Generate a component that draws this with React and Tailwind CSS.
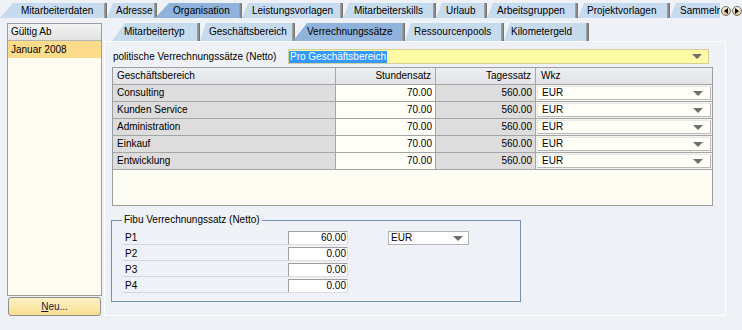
import clsx from 'clsx';

const mainTabs = [
  { label: 'Mitarbeiterdaten', w: 'w-[107px]', pl: 'pl-[21px]', first: true },
  { label: 'Adresse', w: 'w-[50px]', pl: 'pl-[9px]' },
  { label: 'Organisation', w: 'w-[87px]', pl: 'pl-[18px]', active: true },
  { label: 'Leistungsvorlagen', w: 'w-[101px]', pl: 'pl-[10px]' },
  { label: 'Mitarbeiterskills', w: 'w-[93px]', pl: 'pl-[11px]' },
  { label: 'Urlaub', w: 'w-[51px]', pl: 'pl-[10px]' },
  { label: 'Arbeitsgruppen', w: 'w-[91px]', pl: 'pl-[10px]' },
  { label: 'Projektvorlagen', w: 'w-[92px]', pl: 'pl-[9px]' },
  { label: 'Sammeln', w: 'w-[80px]', pl: 'pl-[10px]' },
];

const subTabs = [
  { label: 'Mitarbeitertyp', w: 'w-[88px]', pl: 'pl-[12px]', first: true },
  { label: 'Geschäftsbereich', w: 'w-[95px]', pl: 'pl-[9px]' },
  { label: 'Verrechnungssätze', w: 'w-[112px]', pl: 'pl-[14px]', active: true },
  { label: 'Ressourcenpools', w: 'w-[99px]', pl: 'pl-[9px]' },
  { label: 'Kilometergeld', w: 'w-[85px]', pl: 'pl-[7px]' },
];

const bereiche = ['Consulting', 'Kunden Service', 'Administration', 'Einkauf', 'Entwicklung'];

const fibu = [
  { p: 'P1', v: '60.00' },
  { p: 'P2', v: '0.00' },
  { p: 'P3', v: '0.00' },
  { p: 'P4', v: '0.00' },
];

function Caret() {
  return (
    <svg width="10" height="5" viewBox="0 0 10 5" className="shrink-0">
      <path d="M0 0h10L5 5z" fill="#6e6e6e" />
    </svg>
  );
}

function Tab({ t }) {
  return (
    <div
      className={clsx(
        'flex h-full shrink-0',
        t.w,
        t.active && '-ml-[2px] z-10',
        t.active
          ? 'bg-[#8fb3dc] [clip-path:polygon(14px_0,100%_0,100%_100%,0_100%)]'
          : t.first
            ? 'bg-[#c7dbef] [clip-path:polygon(13px_0,100%_0,100%_100%,0_100%)]'
            : 'bg-[#c7dbef] [clip-path:polygon(6px_0,100%_0,100%_100%,0_100%)]'
      )}
    >
      <div className={clsx('flex flex-1 items-center whitespace-nowrap overflow-hidden', t.pl)}>{t.label}</div>
      <div className="w-[3px] shrink-0 bg-gradient-to-r from-[#a9a9a9] to-[#6c6c6c]" />
    </div>
  );
}

function ScrollBtn({ dir }) {
  return (
    <div className="flex h-[10px] w-[10px] items-center justify-center rounded-full border border-[#6f6f6f] bg-gradient-to-b from-[#fbf3d6] to-[#d9c48a]">
      <svg width="4" height="6" viewBox="0 0 4 6">
        <path d={dir === 'l' ? 'M4 0v6L0 3z' : 'M0 0v6l4-3z'} fill="#000" />
      </svg>
    </div>
  );
}

export default function App() {
  return (
    <div className="h-[330px] w-[742px] overflow-hidden bg-[#eef1f6] font-['Liberation_Sans',Arial,sans-serif] text-[10px] leading-none text-black">
      {/* Haupt-Reiter */}
      <div className="flex h-[18px] items-end">
        <div className="flex h-[15px] w-[720px] overflow-hidden">
          {mainTabs.map(t => <Tab key={t.label} t={t} />)}
        </div>
        <div className="mb-[2px] flex gap-[1px] self-center pt-[6px] pl-[1px]">
          <ScrollBtn dir="l" />
          <ScrollBtn dir="r" />
        </div>
      </div>

      <div className="flex pt-[5px]">
        {/* Gültig Ab Liste */}
        <div className="ml-[7px] flex w-[95px] flex-col">
          <div className="flex h-[273px] flex-col border border-[#9c9c9c] bg-[#fffdf2]">
            <div className="flex h-[17px] items-center border-b border-[#b4b4b4] bg-gradient-to-b from-[#f3f3f3] to-[#e3e3e3] pl-[3px]">Gültig Ab</div>
            <div className="flex h-[17px] items-center bg-[#fcdc8b] pl-[3px]">Januar 2008</div>
          </div>
          <button className="mt-[1px] ml-[1px] flex h-[19px] w-[93px] items-center justify-center rounded-[3px] border border-[#8e8e8e] bg-gradient-to-b from-[#fdf1c6] to-[#f9df8e] text-[10px] text-[#1a1a40]">
            <span className="underline">N</span>eu...
          </button>
        </div>

        {/* Rechter Bereich */}
        <div className="ml-[2px] flex w-[622px] flex-col">
          <div className="flex h-[18px] pl-[8px]">
            {subTabs.map(t => <Tab key={t.label} t={t} />)}
          </div>
          <div className="flex h-[275px] flex-col border border-[#fafcff] pl-[7px]">
            <div className="mt-[7px] flex h-[15px] items-center">
              <div className="w-[176px] pl-[1px]">politische Verrechnungssätze (Netto)</div>
              <div className="flex h-[15px] w-[421px] items-center justify-between border border-[#d2cf98] bg-[#fffaa6] pr-[6px]">
                <span className="flex h-[12px] items-center bg-[#3399ff] px-[1px] text-white">Pro Geschäftsbereich</span>
                <Caret />
              </div>
            </div>

            {/* Tabelle */}
            <div className="mt-[3px] flex h-[139px] w-[601px] flex-col border border-[#9d9d9d] bg-[#fdfdf3]">
              <div className="flex h-[17px] border-b border-[#a5a5a5] bg-gradient-to-b from-[#eceef1] to-[#e2e4e8]">
                <div className="flex w-[223px] items-center border-r border-[#a5a5a5] pl-[4px]">Geschäftsbereich</div>
                <div className="flex w-[100px] items-center justify-end border-r border-[#a5a5a5] pr-[4px]">Stundensatz</div>
                <div className="flex w-[100px] items-center justify-end border-r border-[#a5a5a5] pr-[4px]">Tagessatz</div>
                <div className="flex flex-1 items-center pl-[5px]">Wkz</div>
              </div>
              {bereiche.map(b => (
                <div key={b} className="flex h-[17px] border-b border-[#a5a5a5]">
                  <div className="flex w-[223px] items-center border-r border-[#a5a5a5] bg-[#dddddd] pl-[4px]">{b}</div>
                  <div className="flex w-[100px] items-center justify-end border-r border-[#a5a5a5] bg-[#fefef6] pr-[3px]">70.00</div>
                  <div className="flex w-[100px] items-center justify-end border-r border-[#a5a5a5] bg-[#dddddd] pr-[3px]">560.00</div>
                  <div className="flex flex-1 bg-[#f4f4ee] p-[1px]">
                    <div className="flex flex-1 items-center justify-between border border-t-[#e8e8e8] border-l-[#e8e8e8] border-b-[#b8b8b8] border-r-[#b8b8b8] bg-[#fffff8] pl-[4px] pr-[7px]">
                      <span>EUR</span>
                      <Caret />
                    </div>
                  </div>
                </div>
              ))}
            </div>

            {/* Fibu Gruppe */}
            <div className="relative mt-[14px] -ml-[1px] flex h-[82px] w-[410px] flex-col gap-[2px] border border-[#7391b4] pt-[10px]">
              <span className="absolute -top-[6px] left-[10px] bg-[#eef1f6] px-[2px]">Fibu Verrechnungssatz (Netto)</span>
              {fibu.map((f, i) => (
                <div key={f.p} className="flex h-[14px]">
                  <div className="ml-[11px] flex w-[165px] items-center border-b border-[#d3d9e1] pl-[2px]">{f.p}</div>
                  <div className="flex w-[60px] items-center justify-end border border-t-[#a0a0a0] border-l-[#a0a0a0] border-b-[#dcdcdc] border-r-[#dcdcdc] bg-white pr-[1px]">{f.v}</div>
                  {i === 0 && (
                    <div className="ml-[40px] flex w-[81px] items-center justify-between border border-[#b2b2b2] bg-white pl-[2px] pr-[5px]">
                      <span>EUR</span>
                      <Caret />
                    </div>
                  )}
                </div>
              ))}
            </div>
          </div>
        </div>
      </div>
    </div>
  );
}
